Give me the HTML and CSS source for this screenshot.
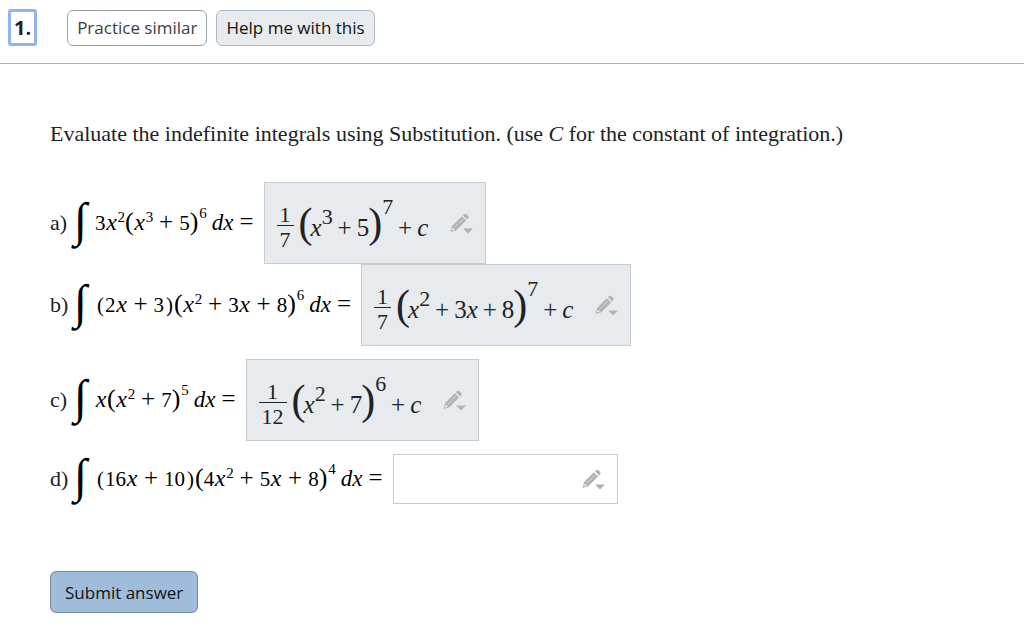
FILE: index.html
```html
<!DOCTYPE html>
<html lang="en">
<head>
<meta charset="utf-8">
<title>Question 1</title>
<link rel="stylesheet" href="styles.css">
</head>
<body>
<svg class="defs" aria-hidden="true">
  <symbol id="pencil" viewBox="0 0 24 22">
    <path fill="#b0b3b6" d="M12.900 2.300 14.200 1Q15.200 0.200 16.400 1.200L18.200 3Q19.100 4.200 18.200 5.300L17 6.600ZM11.900 3.300 16 7.600 6.400 17.200 0.600 18.900 2.100 13Z"/>
    <path fill="none" stroke="#e8ebee" stroke-width="0.700" d="M4.800 14.200 12.900 6"/>
    <path fill="#f4f5f6" d="M2.700 14.600 4.800 16.700 2.100 17.400Z"/>
    <path fill="#b0b3b6" d="M13 15.500H23L18 20.500Z"/>
  </symbol>
</svg>
<header class="toolbar">
  <h1 class="number">1.</h1>
  <button class="btn" type="button">Practice similar</button>
  <button class="btn btn-help" type="button">Help me with this</button>
</header>
<main>
  <form class="question">
    <p class="prompt">Evaluate the indefinite integrals using Substitution. (use <i>C</i> for the constant of integration.)</p>

    <div class="part">
      <span class="label">a)</span><span class="int">∫</span>
      <span class="math">3<i>x</i><sup>2</sup><b>(</b><i>x</i><sup>3</sup><span class="op">+</span>5<b>)</b><sup class="high">6</sup><em>dx</em><span class="op">=</span></span>
      <div class="answer">
        <span class="entry"><span class="frac"><span>1</span><span>7</span></span><b>(</b><i>x</i><sup>3</sup><span class="op">+</span>5<b>)</b><sup class="high">7</sup><span class="op">+</span><i>c</i></span>
        <button class="edit" type="button" aria-label="Edit answer a"><svg><use href="#pencil"/></svg></button>
      </div>
    </div>

    <div class="part">
      <span class="label">b)</span><span class="int">∫</span>
      <span class="math"><span class="par">(</span>2<i>x</i><span class="op">+</span>3<span class="par">)</span><b>(</b><i>x</i><sup>2</sup><span class="op">+</span>3<i>x</i><span class="op">+</span>8<b>)</b><sup class="high">6</sup><em>dx</em><span class="op">=</span></span>
      <div class="answer">
        <span class="entry"><span class="frac"><span>1</span><span>7</span></span><b>(</b><i>x</i><sup>2</sup><span class="op">+</span>3<i>x</i><span class="op">+</span>8<b>)</b><sup class="high">7</sup><span class="op">+</span><i>c</i></span>
        <button class="edit" type="button" aria-label="Edit answer b"><svg><use href="#pencil"/></svg></button>
      </div>
    </div>

    <div class="part spaced">
      <span class="label">c)</span><span class="int">∫</span>
      <span class="math"><i>x</i><b>(</b><i>x</i><sup>2</sup><span class="op">+</span>7<b>)</b><sup class="high">5</sup><em>dx</em><span class="op">=</span></span>
      <div class="answer">
        <span class="entry"><span class="frac"><span>1</span><span>12</span></span><b>(</b><i>x</i><sup>2</sup><span class="op">+</span>7<b>)</b><sup class="high">6</sup><span class="op">+</span><i>c</i></span>
        <button class="edit" type="button" aria-label="Edit answer c"><svg><use href="#pencil"/></svg></button>
      </div>
    </div>

    <div class="part spaced">
      <span class="label">d)</span><span class="int">∫</span>
      <span class="math"><span class="par">(</span>16<i>x</i><span class="op">+</span>10<span class="par">)</span><b>(</b>4<i>x</i><sup>2</sup><span class="op">+</span>5<i>x</i><span class="op">+</span>8<b>)</b><sup class="high">4</sup><em>dx</em><span class="op">=</span></span>
      <div class="answer empty">
        <input class="field" type="text" aria-label="Answer d">
        <button class="edit" type="button" aria-label="Edit answer d"><svg><use href="#pencil"/></svg></button>
      </div>
    </div>

    <button class="submit" type="submit">Submit answer</button>
  </form>
</main>
</body>
</html>
```
FILE: styles.css
```css
* { box-sizing: border-box; }
body {
  margin: 0;
  background: #fff;
  color: #202224;
  font-family: "Open Sans", "Noto Sans", sans-serif;
}
button { font-family: inherit; cursor: pointer; }
.defs { display: none; }

.toolbar {
  display: flex;
  align-items: center;
  padding: 9px 8px 17px;
  border-bottom: 1px solid #a9b0c0;
}
.number {
  margin: 0 30px 0 0;
  padding: 0 3px;
  border: 3px solid #94b3f5;
  border-radius: 3px;
  font-size: 20px;
  line-height: 31px;
}
.btn {
  height: 36px;
  margin-right: 9px;
  padding: 0 9px;
  border: 1px solid #98a2b1;
  border-radius: 6px;
  background: #fff;
  color: #3c4045;
  font-size: 17px;
}
.btn-help {
  border-color: #b0b9c6;
  background: #e8ebee;
  color: #111;
}

.question {
  padding: 56px 50px 17px;
  font-family: "Liberation Serif", serif;
}
.prompt {
  margin: 0 0 34px;
  font-size: 22px;
  line-height: 28px;
}
.part {
  display: flex;
  align-items: center;
}
.part.spaced { margin-top: 13px; }
.label { width: 24px; font-size: 22px; }
.int {
  width: 21px;
  padding-bottom: 6px;
  color: #000;
  font-size: 48px;
  font-style: italic;
  line-height: 44px;
}

.math {
  color: #000;
  font-size: 21px;
  line-height: 28px;
  white-space: nowrap;
}
.math i {
  display: inline-block;
  width: 12px;
  font-size: 24px;
  line-height: 20px;
  text-align: center;
}
.math em { margin-left: 4px; font-size: 23px; line-height: 20px; }
.math b { font-size: 26px; font-weight: normal; line-height: 0; }
.math .par { margin: 0 1px 0 2px; }
.math sup {
  font-size: 15px;
  line-height: 0;
  vertical-align: 8px;
}
.math .high { margin: 0 1px; vertical-align: 12px; }
.op { display: inline-block; width: 24px; text-align: center; }
.math .op { width: 26px; font-size: 25px; line-height: 20px; }

.answer {
  display: flex;
  align-items: center;
  height: 82px;
  margin-left: 4px;
  padding: 0 11px 0 12px;
  border: 1px solid #c9cccf;
  background: #e8ebee;
}
.entry {
  padding-top: 8px;
  font-size: 25px;
  line-height: 28px;
  white-space: nowrap;
}
.entry b {
  margin: 0 -2px 0 -1px;
  font-size: 42px;
  font-weight: normal;
  line-height: 0;
  vertical-align: -1px;
}
.entry sup { font-size: 22px; line-height: 0; vertical-align: 12px; }
.entry .high { margin-left: 2px; vertical-align: 22px; }
.frac {
  display: inline-grid;
  margin-right: 6px;
  font-size: 22px;
  line-height: 20px;
  text-align: center;
  vertical-align: 14px;
}
.frac span { padding: 0 3px; }
.frac span + span { padding-top: 4px; border-top: 1px solid #202224; }
.edit {
  margin: 2px 0 0 22px;
  padding: 0;
  border: 0;
  background: none;
}
.edit svg { display: block; width: 24px; height: 22px; }
.empty {
  height: 50px;
  background: #fff;
}
.field {
  width: 154px;
  border: 0;
  outline: 0;
  background: none;
  font: inherit;
}

.submit {
  height: 42px;
  margin-top: 67px;
  padding: 0 14px;
  border: 1px solid #7b8794;
  border-radius: 6px;
  background: #9fbddb;
  color: #111;
  font-family: "Open Sans", "Noto Sans", sans-serif;
  font-size: 17px;
}
```
